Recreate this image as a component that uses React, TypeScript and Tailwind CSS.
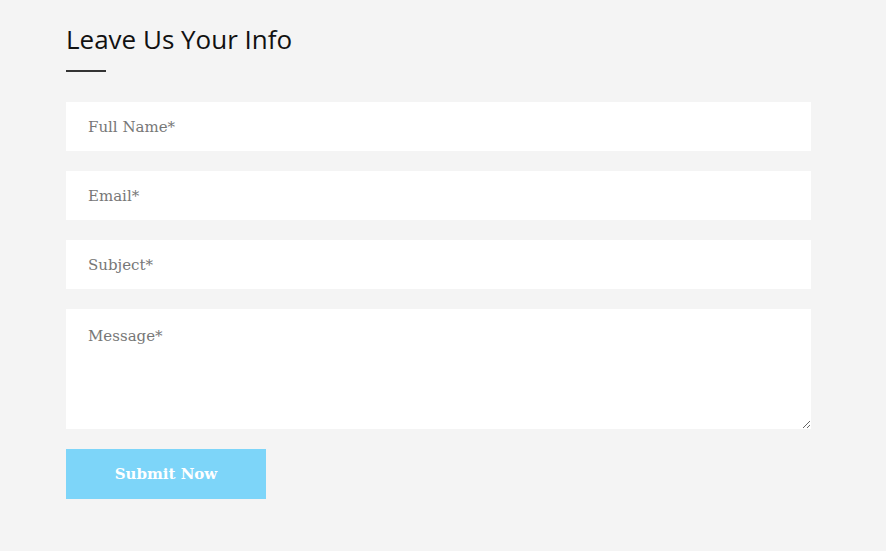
export default function App() {
  const fields = ['Full Name*', 'Email*', 'Subject*'];
  return (
    <div className="min-h-[551px] w-full bg-[#f4f4f4] pl-[66px] pr-[75px] pt-[22px]">
      <h2 className="font-['Open_Sans',sans-serif] text-[26px] leading-[34px] text-[#111]">Leave Us Your Info</h2>
      <div className="mt-[14px] h-[2px] w-[40px] bg-[#333]" />
      <form className="mt-[30px] flex flex-col gap-[20px]" onSubmit={(e) => e.preventDefault()}>
        {fields.map((f) => (
          <input
            key={f}
            type="text"
            placeholder={f}
            className="h-[49px] w-full bg-white px-[22px] font-['DejaVu_Serif',serif] text-[15px] text-[#333] placeholder-[#777] outline-none"
          />
        ))}
        <textarea
          placeholder="Message*"
          className="h-[120px] w-full bg-white px-[22px] pt-[16px] font-['DejaVu_Serif',serif] text-[15px] text-[#333] placeholder-[#777] outline-none"
        />
        <div>
          <button
            type="submit"
            className="h-[50px] w-[200px] bg-[#7dd5f9] font-['DejaVu_Serif',serif] text-[15px] font-bold text-white"
          >
            Submit Now
          </button>
        </div>
      </form>
    </div>
  );
}
